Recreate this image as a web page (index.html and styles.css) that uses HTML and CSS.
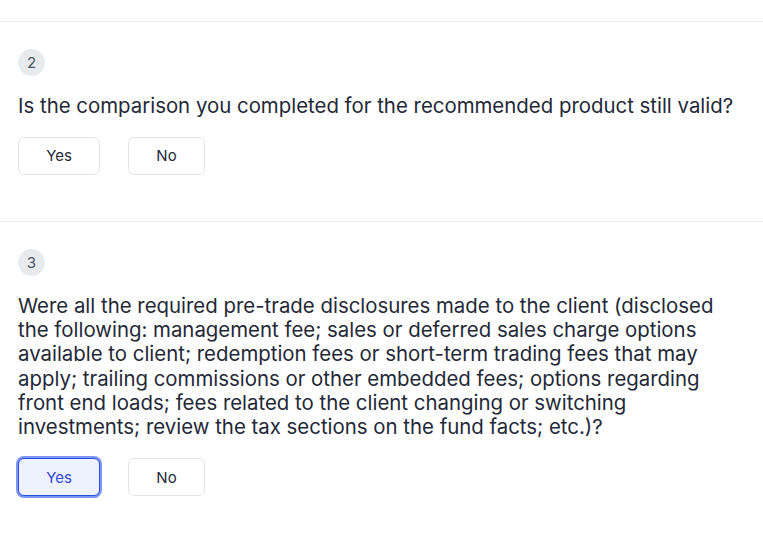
FILE: index.html
```html
<!DOCTYPE html>
<html lang="en">
<head>
<meta charset="utf-8">
<title>Questions</title>
<link rel="stylesheet" href="styles.css">
</head>
<body>
<div class="page">
  <div class="top-space"></div>
  <section class="question">
    <div class="badge">2</div>
    <p class="prompt">Is the comparison you completed for the recommended product still valid?</p>
    <div class="choices">
      <button class="choice choice-yes">Yes</button>
      <button class="choice choice-no">No</button>
    </div>
  </section>
  <section class="question">
    <div class="badge">3</div>
    <p class="prompt">Were all the required pre-trade disclosures made to the client (disclosed the following: management fee; sales or deferred sales charge options available to client; redemption fees or short-term trading fees that may apply; trailing commissions or other embedded fees; options regarding front end loads; fees related to the client changing or switching investments; review the tax sections on the fund facts; etc.)?</p>
    <div class="choices">
      <button class="choice choice-yes selected">Yes</button>
      <button class="choice choice-no">No</button>
    </div>
  </section>
</div>
</body>
</html>
```
FILE: styles.css
```css
* { box-sizing: border-box; }
html, body {
  margin: 0;
  padding: 0;
  background: #ffffff;
}
body {
  font-family: Inter, "Noto Sans", "Liberation Sans", sans-serif;
  color: #1f2937;
}
.page {
  width: 763px;
}
.top-space {
  height: 21px;
}
.question {
  border-top: 1px solid #e9eaed;
  padding: 27px 18px 46px 18px;
  display: flex;
  flex-direction: column;
  align-items: flex-start;
}
.badge {
  width: 27px;
  height: 27px;
  border-radius: 50%;
  background: #e8eaee;
  color: #4b5563;
  font-size: 15px;
  display: flex;
  align-items: center;
  justify-content: center;
}
.prompt {
  margin: 18px 0 0 0;
  font-size: 20.4px;
  line-height: 24.3px;
  color: #1f2937;
  max-width: 724px;
}
.choices {
  display: flex;
  gap: 28px;
  margin-top: 18.5px;
}
.choice {
  font-family: inherit;
  font-size: 15px;
  color: #1f2937;
  background: #ffffff;
  border: 1px solid #e3e5e9;
  border-radius: 6px;
  height: 38px;
  padding: 0;
  cursor: pointer;
}
.choice-yes { width: 82px; }
.choice-no { width: 77px; }
.choice.selected {
  background: #eef1fe;
  border-color: #2f4be0;
  color: #3347d6;
  box-shadow: 0 0 0 2px #7b96f5;
}
```
